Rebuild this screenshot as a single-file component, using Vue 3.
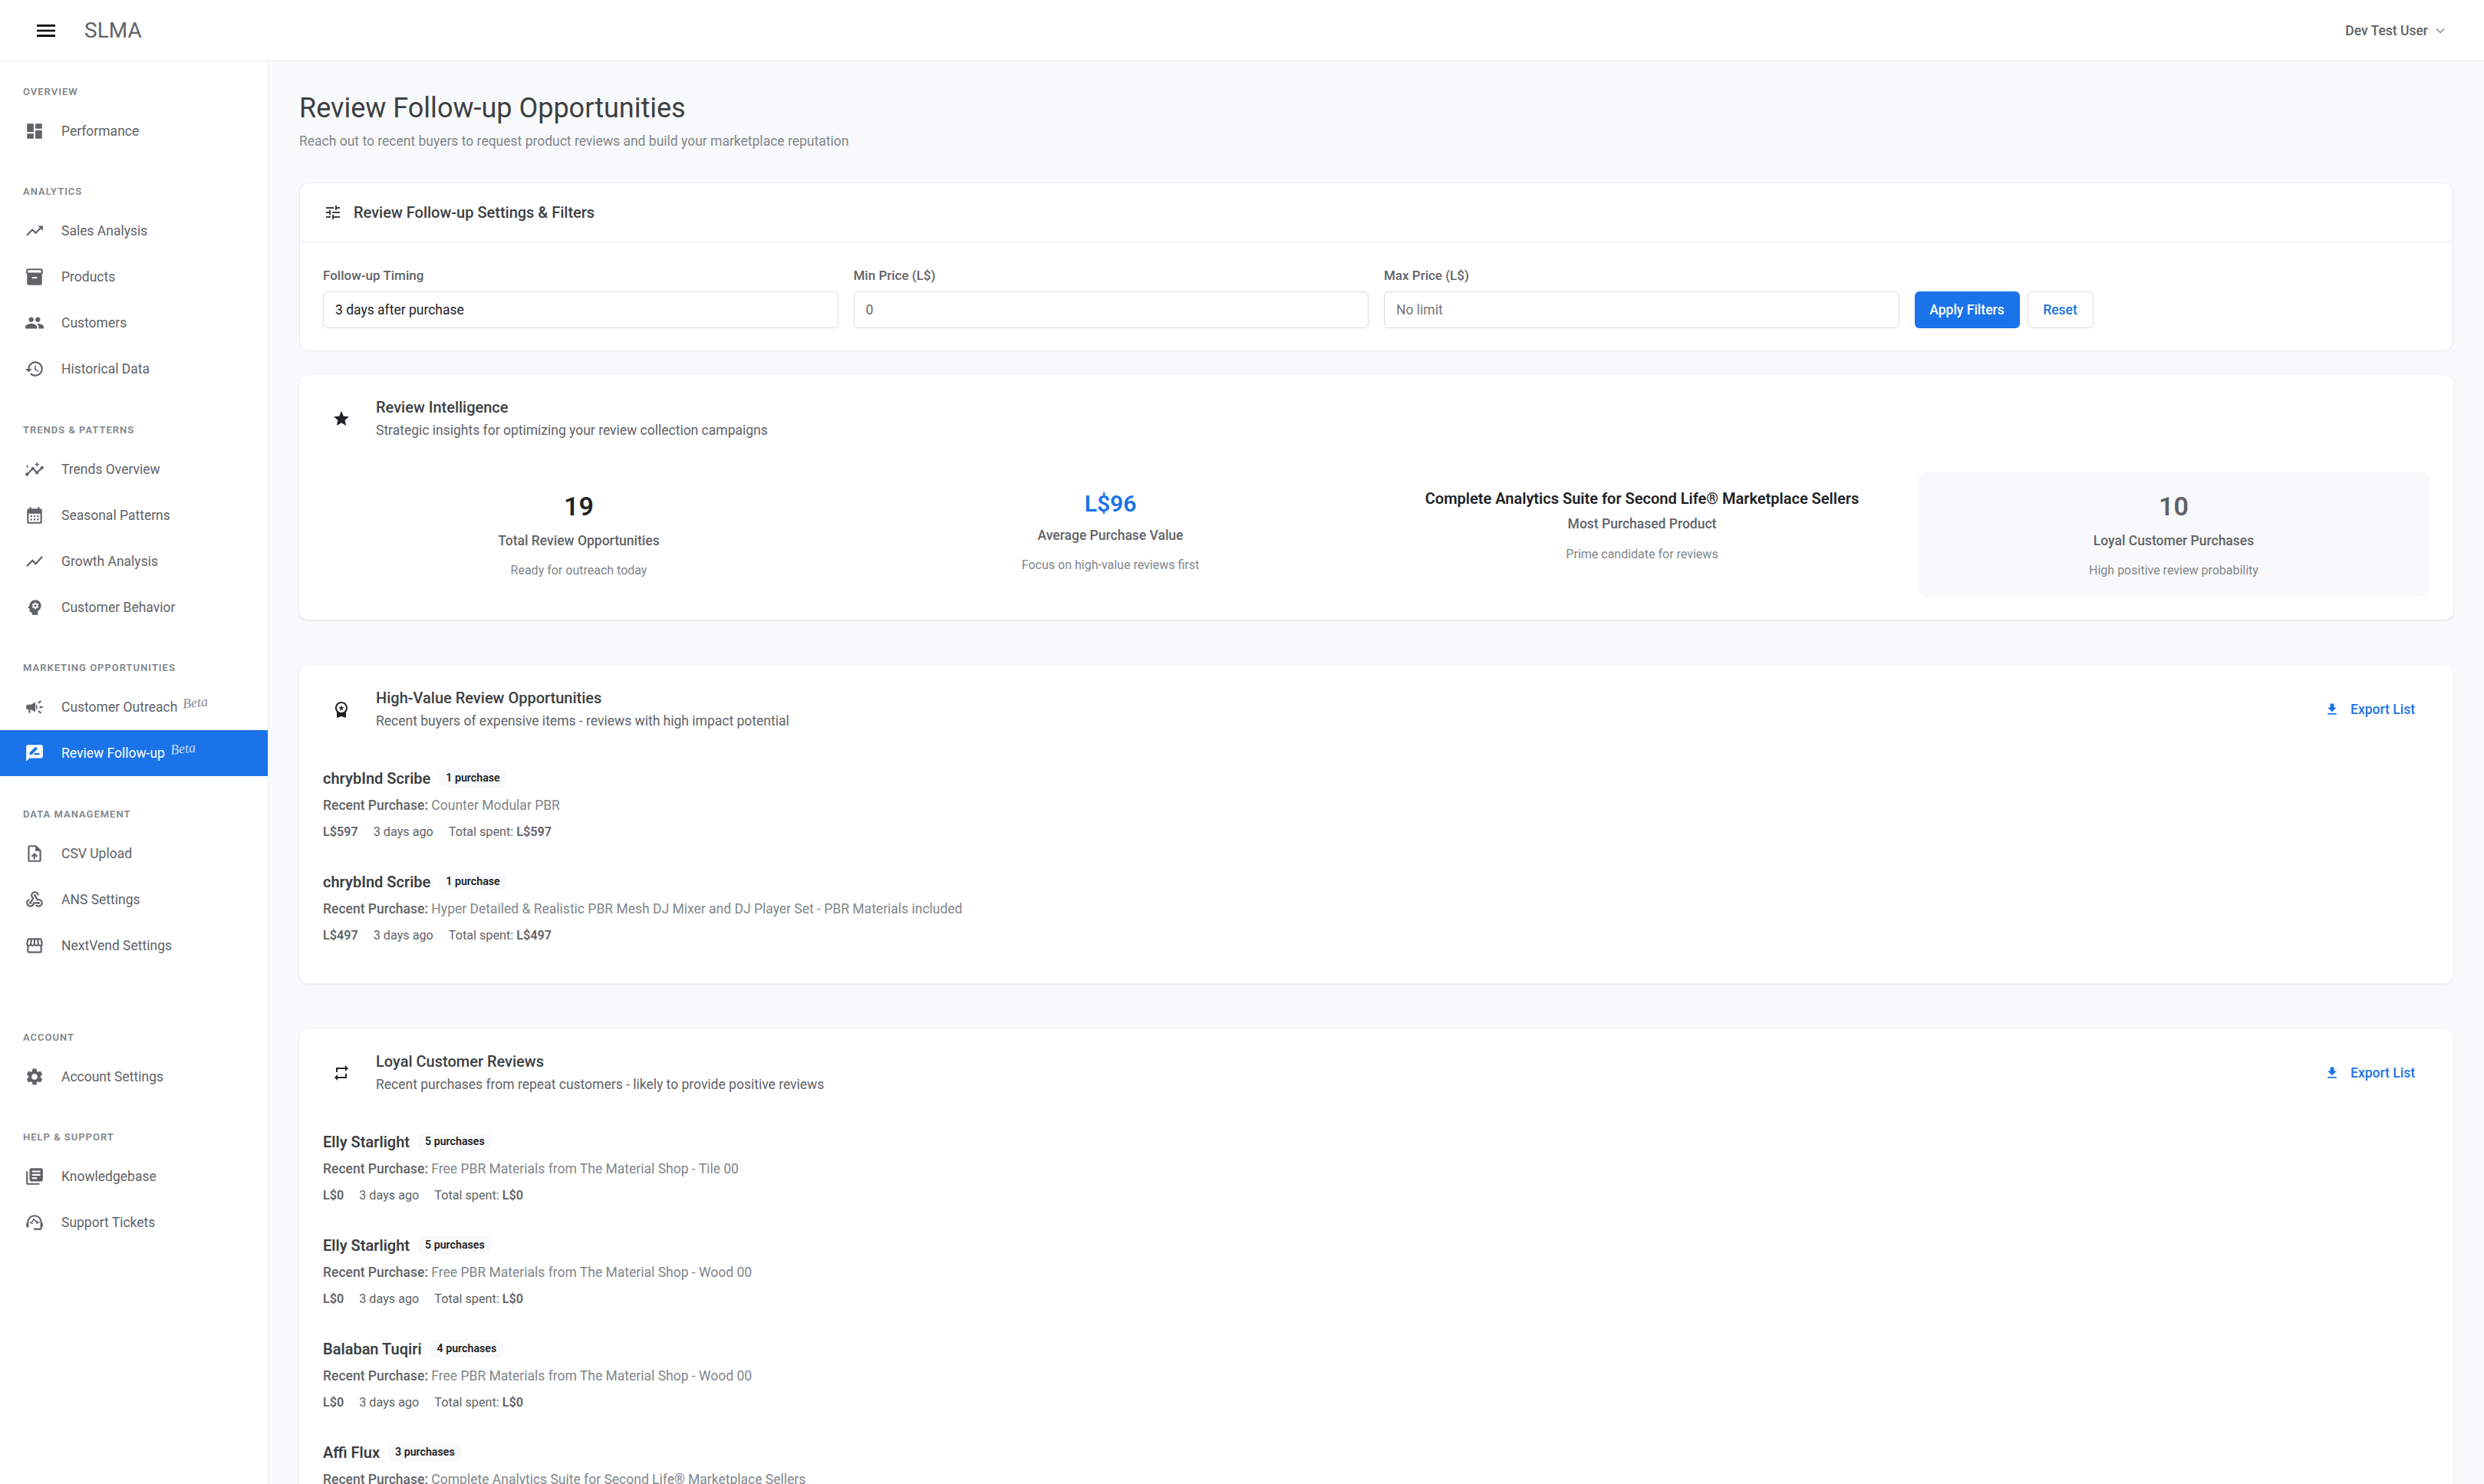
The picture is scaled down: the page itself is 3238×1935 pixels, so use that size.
<template>
  <div class="app">
    <header class="topbar">
      <button class="menu-btn" type="button">
        <svg viewBox="0 0 24 24"><path d="M3 18h18v-2H3v2zm0-5h18v-2H3v2zm0-7v2h18V6H3z" /></svg>
      </button>
      <span class="brand">SLMA</span>
      <div class="user">
        <span>Dev Test User</span>
        <svg class="chevron" viewBox="0 0 12 8"><path d="M1 1.5l5 5 5-5" /></svg>
      </div>
    </header>

    <div class="body-row">
      <!-- Sidebar -->
      <aside class="sidebar">
        <section
          v-for="group in navGroups"
          :key="group.title"
          class="nav-group"
          :class="{ 'nav-group-spaced': group.spaced }"
        >
          <div class="nav-title">{{ group.title }}</div>
          <a
            v-for="item in group.items"
            :key="item.label"
            class="nav-item"
            :class="{ active: item.active }"
          >
            <svg class="nav-icon" viewBox="0 0 24 24"><path v-for="d in icons[item.icon]" :key="d" :d="d" /></svg>
            <span>{{ item.label }}</span>
            <em v-if="item.beta" class="beta">Beta</em>
          </a>
        </section>
      </aside>

      <!-- Page content -->
      <main class="content">
        <h1 class="page-title">Review Follow-up Opportunities</h1>
        <p class="page-sub">Reach out to recent buyers to request product reviews and build your marketplace reputation</p>

        <div class="filter-card">
          <div class="filter-head">
            <svg class="head-icon" viewBox="0 0 24 24"><path v-for="d in icons.tune" :key="d" :d="d" /></svg>
            <span>Review Follow-up Settings &amp; Filters</span>
          </div>
          <div class="filter-body">
            <label class="field">
              <span>Follow-up Timing</span>
              <input class="input input-dark" type="text" value="3 days after purchase" readonly />
            </label>
            <label class="field">
              <span>Min Price (L$)</span>
              <input class="input" type="text" value="0" readonly />
            </label>
            <label class="field">
              <span>Max Price (L$)</span>
              <input class="input" type="text" placeholder="No limit" readonly />
            </label>
            <div class="filter-actions">
              <button class="btn btn-primary" type="button">Apply Filters</button>
              <button class="btn btn-outline" type="button">Reset</button>
            </div>
          </div>
        </div>

        <div class="card">
          <div class="card-head">
            <svg class="card-icon" viewBox="0 0 24 24"><path v-for="d in icons.star" :key="d" :d="d" /></svg>
            <div>
              <h2>Review Intelligence</h2>
              <p>Strategic insights for optimizing your review collection campaigns</p>
            </div>
          </div>
          <div class="stats">
            <div v-for="stat in stats" :key="stat.label" class="stat" :class="stat.kind">
              <div class="stat-value">{{ stat.value }}</div>
              <div class="stat-label">{{ stat.label }}</div>
              <div class="stat-note">{{ stat.note }}</div>
            </div>
          </div>
        </div>

        <div v-for="block in blocks" :key="block.title" class="card card-list">
          <div class="card-head">
            <svg class="card-icon" viewBox="0 0 24 24"><path v-for="d in icons[block.icon]" :key="d" :d="d" /></svg>
            <div>
              <h2>{{ block.title }}</h2>
              <p>{{ block.sub }}</p>
            </div>
            <a class="export">
              <svg viewBox="0 0 24 24"><path v-for="d in icons.download" :key="d" :d="d" /></svg>
              Export List
            </a>
          </div>
          <div class="buyers">
            <div v-for="(buyer, i) in block.buyers" :key="i" class="buyer">
              <div class="buyer-name">
                <strong>{{ buyer.name }}</strong>
                <span class="badge">{{ buyer.count }}</span>
              </div>
              <div class="buyer-item"><b>Recent Purchase:</b> {{ buyer.product }}</div>
              <div v-if="buyer.price" class="buyer-meta">
                <b>{{ buyer.price }}</b>
                <span>3 days ago</span>
                <span>Total spent: <b>{{ buyer.price }}</b></span>
              </div>
            </div>
          </div>
        </div>
      </main>
    </div>
  </div>
</template>

<script setup>
const icons = {
  dashboard: ['M3 13h8V3H3v10zm0 8h8v-6H3v6zm10 0h8V11h-8v10zm0-18v6h8V3h-8z'],
  trending: ['M16 6l2.29 2.29-4.88 4.88-4-4L2 16.59 3.41 18l6-6 4 4 6.3-6.29L22 12V6z'],
  inventory: ['M20 2H4c-1 0-2 .9-2 2v3.01c0 .72.43 1.34 1 1.69V20c0 1.1 1.1 2 2 2h14c.9 0 2-.9 2-2V8.7c.57-.35 1-.97 1-1.69V4c0-1.1-1-2-2-2zm-5 12H9v-2h6v2zm5-7H4V4l16-.02V7z'],
  people: ['M16 11c1.66 0 2.99-1.34 2.99-3S17.66 5 16 5c-1.66 0-3 1.34-3 3s1.34 3 3 3zm-8 0c1.66 0 2.99-1.34 2.99-3S9.66 5 8 5C6.34 5 5 6.34 5 8s1.34 3 3 3zm0 2c-2.33 0-7 1.17-7 3.5V19h14v-2.5c0-2.33-4.67-3.5-7-3.5zm8 0c-.29 0-.62.02-.97.05 1.16.84 1.97 1.97 1.97 3.45V19h6v-2.5c0-2.33-4.67-3.5-7-3.5z'],
  history: ['M13 3c-4.97 0-9 4.03-9 9H1l3.89 3.89.07.14L9 12H6c0-3.87 3.13-7 7-7s7 3.13 7 7-3.13 7-7 7c-1.93 0-3.68-.79-4.94-2.06l-1.42 1.42C8.27 19.99 10.51 21 13 21c4.97 0 9-4.03 9-9s-4.03-9-9-9zm-1 5v5l4.28 2.54.72-1.21-3.5-2.08V8H12z'],
  insights: [
    'M21 8c-1.45 0-2.26 1.44-1.93 2.51l-3.55 3.56c-.3-.09-.74-.09-1.04 0l-2.55-2.55C12.27 10.45 11.46 9 10 9c-1.45 0-2.27 1.44-1.93 2.52l-4.56 4.55C2.44 15.74 1 16.55 1 18c0 1.1.9 2 2 2 1.45 0 2.26-1.44 1.93-2.51l4.55-4.56c.3.09.74.09 1.04 0l2.55 2.55C12.73 16.55 13.54 18 15 18c1.45 0 2.27-1.44 1.93-2.52l3.56-3.55c1.07.33 2.51-.48 2.51-1.93 0-1.1-.9-2-2-2z',
    'M15 9l.94-2.07L18 6l-2.06-.93L15 3l-.92 2.07L12 6l2.08.93zM3.5 11L4 9l2-.5L4 8l-.5-2L3 8l-2 .5L3 9z'
  ],
  calendar: ['M19 4h-1V2h-2v2H8V2H6v2H5c-1.1 0-2 .9-2 2v14c0 1.1.9 2 2 2h14c1.1 0 2-.9 2-2V6c0-1.1-.9-2-2-2zm0 16H5V10h14v10zM9 14H7v-2h2v2zm4 0h-2v-2h2v2zm4 0h-2v-2h2v2zm-8 4H7v-2h2v2zm4 0h-2v-2h2v2zm4 0h-2v-2h2v2z'],
  chart: ['M3.5 18.49l6-6.01 4 4L22 6.92l-1.41-1.41-7.09 7.97-4-4L2 16.99z'],
  psychology: [
    'M13 8.57c-.79 0-1.43.64-1.43 1.43s.64 1.43 1.43 1.43 1.43-.64 1.43-1.43-.64-1.43-1.43-1.43z',
    'M13 3C9.25 3 6.2 5.94 6.02 9.64L4.1 12.2c-.25.33-.01.8.4.8H6v3c0 1.1.9 2 2 2h1v3h7v-4.68c2.36-1.12 4-3.53 4-6.32 0-3.87-3.13-7-7-7zm3 7c0 .13-.01.26-.02.39l.83.66c.08.06.1.16.05.25l-.8 1.39c-.05.09-.16.12-.24.09l-.99-.4c-.21.16-.43.29-.67.39L14 13.83c-.01.1-.1.17-.2.17h-1.6c-.1 0-.18-.07-.2-.17l-.15-1.06c-.25-.1-.47-.23-.68-.39l-.99.4c-.09.03-.2 0-.25-.09l-.8-1.39c-.05-.08-.03-.19.05-.25l.84-.66c-.01-.13-.02-.26-.02-.39s.02-.27.04-.39l-.85-.66c-.08-.06-.1-.16-.05-.26l.8-1.38c.05-.09.15-.12.24-.09l1 .4c.2-.15.43-.29.67-.39L12 6.17c.02-.1.1-.17.2-.17h1.6c.1 0 .18.07.2.17l.15 1.06c.24.1.46.23.67.39l1-.4c.09-.03.2 0 .24.09l.8 1.38c.05.09.03.2-.05.26l-.85.66c.03.12.04.25.04.39z'
  ],
  campaign: ['M18 11v2h4v-2h-4zm-2 6.61c.96.71 2.21 1.65 3.2 2.39.4-.53.8-1.07 1.2-1.6-.99-.74-2.24-1.68-3.2-2.4-.4.54-.8 1.08-1.2 1.61zM20.4 5.6c-.4-.53-.8-1.07-1.2-1.6-.99.74-2.24 1.68-3.2 2.4.4.53.8 1.07 1.2 1.6.96-.72 2.21-1.65 3.2-2.4zM4 9c-1.1 0-2 .9-2 2v2c0 1.1.9 2 2 2h1v4h2v-4h1l5 3V6L8 9H4zm11.5 3c0-1.33-.58-2.53-1.5-3.35v6.69c.92-.81 1.5-2.01 1.5-3.34z'],
  review: ['M20 2H4c-1.1 0-1.99.9-1.99 2L2 22l4-4h14c1.1 0 2-.9 2-2V4c0-1.1-.9-2-2-2zM6 14v-2.47l6.88-6.88c.2-.2.51-.2.71 0l1.77 1.77c.2.2.2.51 0 .71L8.47 14H6zm12 0h-7.5l2-2H18v2z'],
  upload: ['M14 2H6c-1.1 0-1.99.9-1.99 2L4 20c0 1.1.89 2 1.99 2H18c1.1 0 2-.9 2-2V8l-6-6zm4 18H6V4h7v5h5v11zM8 15.01l1.41 1.41L11 14.84V19h2v-4.16l1.59 1.59L16 15.01 12.01 11 8 15.01z'],
  webhook: ['M10,15l5.88,0c0.27-0.31,0.67-0.5,1.12-0.5c0.83,0,1.5,0.67,1.5,1.5c0,0.83-0.67,1.5-1.5,1.5c-0.44,0-0.84-0.19-1.12-0.5l-3.98,0c-0.46,2.28-2.48,4-4.9,4c-2.76,0-5-2.24-5-5c0-2.42,1.72-4.44,4-4.9l0,2.07C4.84,13.58,4,14.7,4,16c0,1.65,1.35,3,3,3s3-1.35,3-3V15z M12.5,4c1.65,0,3,1.35,3,3h2c0-2.76-2.24-5-5-5l0,0c-2.76,0-5,2.24-5,5c0,1.43,0.6,2.71,1.55,3.62l-2.35,3.9C6.02,14.66,5.5,15.27,5.5,16c0,0.83,0.67,1.5,1.5,1.5s1.5-0.67,1.5-1.5c0-0.16-0.02-0.31-0.07-0.45l3.38-5.63C10.49,9.61,9.5,8.42,9.5,7C9.5,5.35,10.85,4,12.5,4z M17,13c-0.64,0-1.23,0.2-1.72,0.54l-3.05-5.07C11.53,8.35,11,7.74,11,7c0-0.83,0.67-1.5,1.5-1.5S14,6.17,14,7c0,0.15-0.02,0.29-0.06,0.43l2.19,3.65C16.41,11.03,16.7,11,17,11l0,0c2.76,0,5,2.24,5,5c0,2.76-2.24,5-5,5c-1.85,0-3.47-1.01-4.33-2.5l2.67,0C15.82,18.82,16.38,19,17,19c1.65,0,3-1.35,3-3S18.65,13,17,13z'],
  storefront: ['M21.9 8.89l-1.05-4.37c-.22-.9-1-1.52-1.91-1.52H5.05c-.9 0-1.69.63-1.9 1.52L2.1 8.89c-.24 1.02-.02 2.06.62 2.88.08.11.19.19.28.29V19c0 1.1.9 2 2 2h14c1.1 0 2-.9 2-2v-6.94c.09-.09.2-.18.28-.28.64-.82.87-1.87.62-2.89zm-2.99-3.9l1.05 4.37c.1.42.01.84-.25 1.17-.14.18-.44.47-.94.47-.61 0-1.14-.49-1.21-1.14L16.98 5l1.93-.01zM13 5h1.96l.54 4.52c.05.39-.07.78-.33 1.07-.22.26-.54.41-.95.41-.67 0-1.22-.59-1.22-1.31V5zM8.49 9.52L9.04 5H11v4.69c0 .72-.55 1.31-1.29 1.31-.34 0-.65-.15-.89-.41-.25-.29-.37-.68-.33-1.07zm-4.45-.16L5.05 5h1.97l-.58 4.86c-.08.65-.6 1.14-1.21 1.14-.49 0-.8-.29-.93-.47-.27-.32-.36-.75-.26-1.17zM5 19v-6.03c.08.01.15.03.23.03.87 0 1.66-.36 2.24-.95.6.6 1.4.95 2.31.95.87 0 1.65-.36 2.23-.93.59.57 1.39.93 2.29.93.84 0 1.64-.35 2.24-.95.58.59 1.37.95 2.24.95.08 0 .15-.02.23-.03V19H5z'],
  settings: ['M19.14 12.94c.04-.3.06-.61.06-.94 0-.32-.02-.64-.07-.94l2.03-1.58c.18-.14.23-.41.12-.61l-1.92-3.32c-.12-.22-.37-.29-.59-.22l-2.39.96c-.5-.38-1.03-.7-1.62-.94l-.36-2.54c-.04-.24-.24-.41-.48-.41h-3.84c-.24 0-.43.17-.47.41l-.36 2.54c-.59.24-1.13.57-1.62.94l-2.39-.96c-.22-.08-.47 0-.59.22L2.74 8.87c-.12.21-.08.47.12.61l2.03 1.58c-.05.3-.09.63-.09.94s.02.64.07.94l-2.03 1.58c-.18.14-.23.41-.12.61l1.92 3.32c.12.22.37.29.59.22l2.39-.96c.5.38 1.03.7 1.62.94l.36 2.54c.05.24.24.41.48.41h3.84c.24 0 .44-.17.47-.41l.36-2.54c.59-.24 1.13-.56 1.62-.94l2.39.96c.22.08.47 0 .59-.22l1.92-3.32c.12-.22.07-.47-.12-.61l-2.01-1.58zM12 15.6c-1.98 0-3.6-1.62-3.6-3.6s1.62-3.6 3.6-3.6 3.6 1.62 3.6 3.6-1.62 3.6-3.6 3.6z'],
  books: ['M4 6H2v14c0 1.1.9 2 2 2h14v-2H4V6zm16-4H8c-1.1 0-2 .9-2 2v12c0 1.1.9 2 2 2h12c1.1 0 2-.9 2-2V4c0-1.1-.9-2-2-2zm-1 9H9V9h10v2zm-4 4H9v-2h6v2zm4-8H9V5h10v2z'],
  support: [
    'M21 12.22C21 6.73 16.74 3 12 3c-4.69 0-9 3.65-9 9.28-.6.34-1 .98-1 1.72v2c0 1.1.9 2 2 2h1v-6.1c0-3.87 3.13-7 7-7s7 3.13 7 7V19h-8v2h8c1.1 0 2-.9 2-2v-1.22c.59-.31 1-.92 1-1.64v-2.3c0-.7-.41-1.31-1-1.62z',
    'M8 13a1 1 0 1 0 2 0a1 1 0 1 0-2 0zM14 13a1 1 0 1 0 2 0a1 1 0 1 0-2 0z',
    'M6 12.45c2.47-1 4.33-3.2 4.88-5.89 1.31 2.63 4 4.44 7.12 4.47v1.4c-2.7 0-5.3-1.2-6.9-3.3-.9 1.7-2.9 3.5-5.1 4.3z'
  ],
  tune: ['M3 17v2h6v-2H3zM3 5v2h10V5H3zm10 16v-2h8v-2h-8v-2h-2v6h2zM7 9v2H3v2h4v2h2V9H7zm14 4v-2H11v2h10zm-6-4h2V7h4V5h-4V3h-2v6z'],
  star: ['M12 17.27L18.18 21l-1.64-7.03L22 9.24l-7.19-.61L12 2 9.19 8.63 2 9.24l5.46 4.73L5.82 21z'],
  premium: ['M9.68 13.69L12 11.93l2.31 1.76-.88-2.85L15.75 9h-2.84L12 6.19 11.09 9H8.25l2.31 1.84-.88 2.85zM20 10c0-4.42-3.58-8-8-8s-8 3.58-8 8c0 2.03.76 3.87 2 5.28V23l6-2 6 2v-7.72c1.24-1.41 2-3.25 2-5.28zm-8-6c3.31 0 6 2.69 6 6s-2.69 6-6 6-6-2.69-6-6 2.69-6 6-6z'],
  repeat: ['M7 7h10v3l4-4-4-4v3H5v6h2V7zm10 10H7v-3l-4 4 4 4v-3h12v-6h-2v4z'],
  download: ['M19 9h-4V3H9v6H5l7 7 7-7zM5 18v2h14v-2H5z']
}

const navGroups = [
  { title: 'Overview', items: [{ label: 'Performance', icon: 'dashboard' }] },
  {
    title: 'Analytics',
    items: [
      { label: 'Sales Analysis', icon: 'trending' },
      { label: 'Products', icon: 'inventory' },
      { label: 'Customers', icon: 'people' },
      { label: 'Historical Data', icon: 'history' }
    ]
  },
  {
    title: 'Trends & Patterns',
    items: [
      { label: 'Trends Overview', icon: 'insights' },
      { label: 'Seasonal Patterns', icon: 'calendar' },
      { label: 'Growth Analysis', icon: 'chart' },
      { label: 'Customer Behavior', icon: 'psychology' }
    ]
  },
  {
    title: 'Marketing Opportunities',
    items: [
      { label: 'Customer Outreach', icon: 'campaign', beta: true },
      { label: 'Review Follow-up', icon: 'review', beta: true, active: true }
    ]
  },
  {
    title: 'Data Management',
    items: [
      { label: 'CSV Upload', icon: 'upload' },
      { label: 'ANS Settings', icon: 'webhook' },
      { label: 'NextVend Settings', icon: 'storefront' }
    ]
  },
  { title: 'Account', spaced: true, items: [{ label: 'Account Settings', icon: 'settings' }] },
  {
    title: 'Help & Support',
    items: [
      { label: 'Knowledgebase', icon: 'books' },
      { label: 'Support Tickets', icon: 'support' }
    ]
  }
]

const stats = [
  { value: '19', label: 'Total Review Opportunities', note: 'Ready for outreach today', kind: 'stat-plain' },
  { value: 'L$96', label: 'Average Purchase Value', note: 'Focus on high-value reviews first', kind: 'stat-blue' },
  { value: 'Complete Analytics Suite for Second Life® Marketplace Sellers', label: 'Most Purchased Product', note: 'Prime candidate for reviews', kind: 'stat-text' },
  { value: '10', label: 'Loyal Customer Purchases', note: 'High positive review probability', kind: 'stat-box' }
]

const material = 'Free PBR Materials from The Material Shop - '

const blocks = [
  {
    title: 'High-Value Review Opportunities',
    sub: 'Recent buyers of expensive items - reviews with high impact potential',
    icon: 'premium',
    buyers: [
      { name: 'chrybInd Scribe', count: '1 purchase', product: 'Counter Modular PBR', price: 'L$597' },
      { name: 'chrybInd Scribe', count: '1 purchase', product: 'Hyper Detailed & Realistic PBR Mesh DJ Mixer and DJ Player Set - PBR Materials included', price: 'L$497' }
    ]
  },
  {
    title: 'Loyal Customer Reviews',
    sub: 'Recent purchases from repeat customers - likely to provide positive reviews',
    icon: 'repeat',
    buyers: [
      { name: 'Elly Starlight', count: '5 purchases', product: material + 'Tile 00', price: 'L$0' },
      { name: 'Elly Starlight', count: '5 purchases', product: material + 'Wood 00', price: 'L$0' },
      { name: 'Balaban Tuqiri', count: '4 purchases', product: material + 'Wood 00', price: 'L$0' },
      { name: 'Affi Flux', count: '3 purchases', product: 'Complete Analytics Suite for Second Life® Marketplace Sellers', price: 'L$0' }
    ]
  }
]
</script>

<style>
html,
body {
  margin: 0;
  background: #f8f9fa;
  overflow: hidden;
}
</style>

<style scoped>
.app {
  height: 100vh;
  display: flex;
  flex-direction: column;
  overflow: hidden;
  font-family: Roboto, "Liberation Sans", sans-serif;
  color: #202124;
}

.topbar {
  flex: none;
  height: 79px;
  background: #fff;
  border-bottom: 1px solid #e8eaed;
  display: flex;
  align-items: center;
  padding: 0 51px 0 44px;
}

.menu-btn {
  width: 32px;
  height: 32px;
  padding: 0;
  border: 0;
  background: none;
  margin-right: 34px;
}

.menu-btn svg {
  display: block;
  width: 32px;
  height: 32px;
}

.brand {
  font-size: 28px;
  color: #5f6368;
}

.user {
  margin-left: auto;
  display: flex;
  align-items: center;
  gap: 10px;
  font-size: 17.5px;
  font-weight: 500;
  color: #5f6368;
}

.chevron {
  width: 12px;
  height: 8px;
  fill: none;
  stroke: #80868b;
  stroke-width: 1.4;
}

.body-row {
  flex: 1;
  display: flex;
  min-height: 0;
}

.sidebar {
  flex: none;
  width: 349px;
  background: #fff;
  border-right: 1px solid #e8eaed;
  padding-top: 28px;
}

.nav-group {
  margin-bottom: 37.4px;
}

.nav-group-spaced {
  margin-top: 78px;
}

.nav-title {
  height: 24px;
  line-height: 24px;
  margin-bottom: 9px;
  padding-left: 30px;
  font-size: 13px;
  font-weight: 600;
  letter-spacing: 1px;
  text-transform: uppercase;
  color: #80868b;
}

.nav-item {
  display: flex;
  align-items: center;
  height: 60px;
  padding-left: 32px;
  font-size: 17.5px;
  color: #5f6368;
}

.nav-item.active {
  background: #1a73e8;
  color: #fff;
}

.nav-icon {
  width: 26px;
  height: 26px;
  margin-right: 22px;
  fill: currentColor;
}

.beta {
  margin: -12px 0 0 7px;
  font-family: "Liberation Serif", serif;
  font-size: 18px;
  font-style: italic;
  opacity: 0.75;
  transform: rotate(-6deg);
}

.content {
  flex: 1;
  min-width: 0;
  padding: 37px 40px 0;
  background: #f8f9fa;
}

.page-title {
  margin: 0;
  font-size: 36px;
  line-height: 48px;
  font-weight: 400;
  color: #3c4043;
}

.page-sub {
  margin: 6px 0 41px;
  font-size: 17.5px;
  line-height: 26px;
  color: #80868b;
}

.filter-card {
  background: #fff;
  border: 1px solid #e8eaed;
  border-radius: 12px;
  margin-bottom: 31px;
}

.filter-head {
  display: flex;
  align-items: center;
  gap: 15px;
  height: 76px;
  padding-left: 31px;
  border-bottom: 1px solid #e8eaed;
  font-size: 20px;
  font-weight: 500;
  color: #3c4043;
}

.head-icon {
  width: 24px;
  height: 24px;
  fill: #3c4043;
}

.filter-body {
  display: grid;
  grid-template-columns: repeat(4, 1fr);
  gap: 20px;
  align-items: end;
  padding: 33px 30px 29px;
}

.field {
  display: flex;
  flex-direction: column;
  gap: 11px;
  font-size: 17px;
  line-height: 20px;
  font-weight: 500;
  color: #5f6368;
}

.input {
  height: 48px;
  box-sizing: border-box;
  width: 100%;
  padding: 0 15px;
  border: 1.5px solid #dadce0;
  border-radius: 6px;
  background: #fff;
  font-family: inherit;
  font-size: 17.5px;
  color: #5f6368;
  outline: none;
}

.input::placeholder {
  color: #757575;
}

.input-dark {
  color: #202124;
}

.filter-actions {
  display: flex;
  gap: 10px;
}

.btn {
  height: 48px;
  box-sizing: border-box;
  border-radius: 6px;
  font-family: inherit;
  font-size: 17.5px;
  font-weight: 500;
  padding: 0;
}

.btn-primary {
  width: 137px;
  background: #1a73e8;
  border: 0;
  color: #fff;
}

.btn-outline {
  width: 86px;
  background: #fff;
  border: 1.5px solid #dadce0;
  color: #1a73e8;
}

.card {
  background: #fff;
  border-radius: 12px;
  box-shadow: 0 1px 3px rgba(60, 64, 67, 0.12);
  padding: 30px 31px 30px;
  margin-bottom: 60px;
}

.card-head {
  display: flex;
  align-items: center;
  gap: 33px;
  padding-left: 12px;
}

.card-icon {
  flex: none;
  width: 24px;
  height: 24px;
  fill: #202124;
}

.card-head h2 {
  margin: 0;
  font-size: 20px;
  line-height: 24px;
  font-weight: 500;
  color: #3c4043;
}

.card-head p {
  margin: 6px 0 0;
  font-size: 17.5px;
  line-height: 24px;
  color: #5f6368;
}

.export {
  margin-left: auto;
  margin-right: 19px;
  display: flex;
  align-items: center;
  gap: 14px;
  font-size: 17.5px;
  font-weight: 500;
  color: #1a73e8;
}

.export svg {
  width: 20px;
  height: 20px;
  fill: currentColor;
}

.stats {
  display: grid;
  grid-template-columns: repeat(4, 1fr);
  gap: 26px;
  margin-top: 42px;
}

.stat {
  padding: 24px 16px 23px;
  text-align: center;
  border-radius: 12px;
}

.stat-box {
  background: #f8f9fa;
}

.stat-value {
  font-size: 34px;
  line-height: 42px;
  font-weight: 600;
}

.stat-blue .stat-value {
  font-size: 30px;
  line-height: 35px;
  color: #1a73e8;
}

.stat-text .stat-value {
  margin-top: 2px;
  font-size: 20px;
  line-height: 18px;
}

.stat-box .stat-value {
  color: #5f6368;
}

.stat-label {
  margin-top: 12px;
  font-size: 17.5px;
  line-height: 24px;
  font-weight: 500;
  color: #5f6368;
}

.stat-note {
  margin-top: 16px;
  font-size: 16px;
  line-height: 22px;
  color: #80868b;
}

.stat-text .stat-note {
  margin-top: 17px;
}

.card-list {
  padding-bottom: 51px;
}

.buyers {
  display: flex;
  flex-direction: column;
  gap: 42px;
  margin-top: 51px;
}

.buyer-name {
  display: flex;
  align-items: center;
  gap: 11px;
  height: 24px;
}

.buyer-name strong {
  font-size: 20px;
  font-weight: 600;
  color: #3c4043;
}

.badge {
  height: 24px;
  line-height: 22px;
  padding: 0 9px;
  border-radius: 8px;
  background: #f8f9fa;
  font-size: 14.2px;
  font-weight: 600;
  color: #202124;
}

.buyer-item {
  margin-top: 11px;
  font-size: 17.5px;
  line-height: 24px;
  color: #80868b;
}

.buyer-item b {
  font-weight: 500;
  color: #5f6368;
}

.buyer-meta {
  display: flex;
  gap: 20px;
  margin-top: 12px;
  font-size: 16.2px;
  line-height: 22px;
  color: #5f6368;
}

.buyer-meta b {
  font-weight: 600;
}
</style>
